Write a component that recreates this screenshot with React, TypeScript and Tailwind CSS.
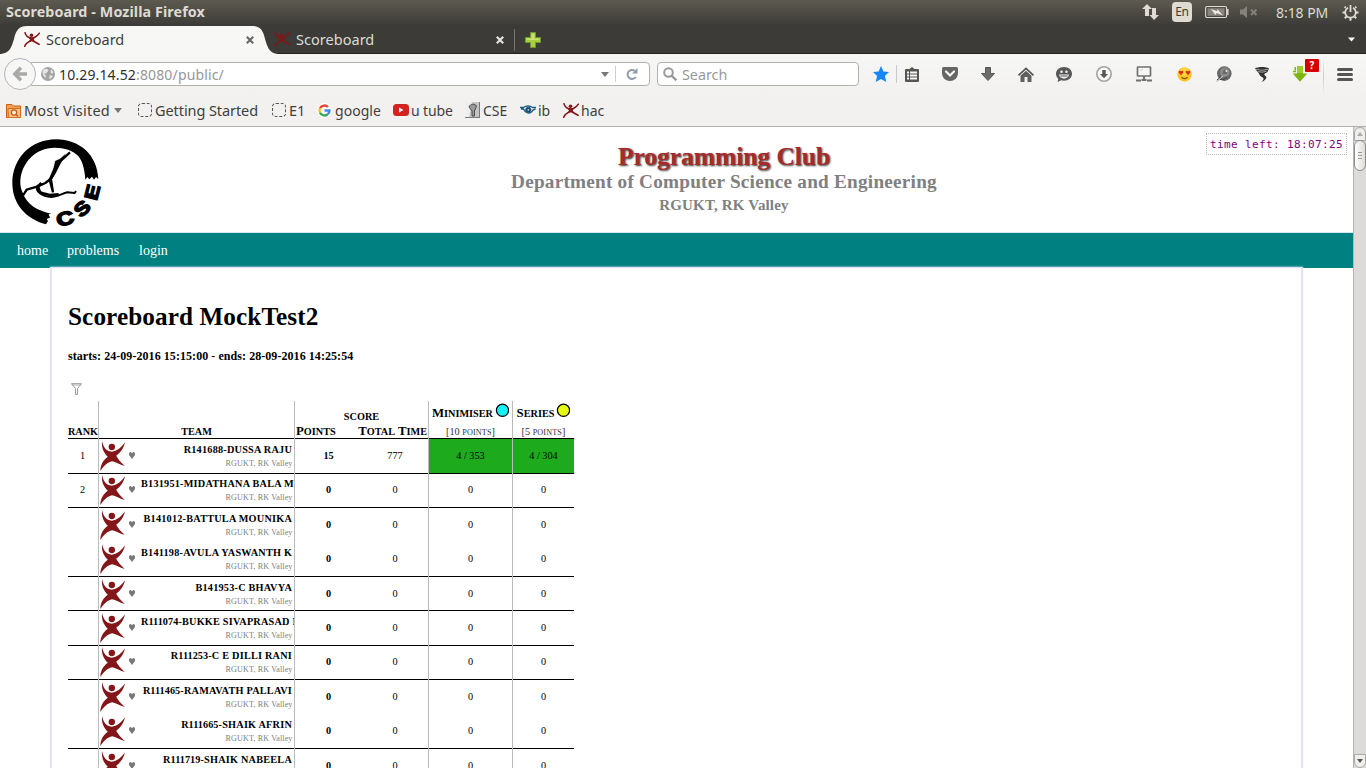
import React from "react";

function Figure({ className }: { className: string }) {
  return (
    <svg className={className} viewBox="0 0 74 90" preserveAspectRatio="none" fill="#821618">
      <circle cx="35" cy="18" r="9.500" />
      <path d="M6 0C10 18 18 31 35 32C50 31 64 19 74 4C70 22 60 36 48 44C52 53 62 64 73 75C58 71 46 63 36 61C22 64 12 74 1 90C1 72 10 56 23 47C11 36 4 20 6 0Z" />
    </svg>
  );
}

function SmallFigure({ className }: { className: string }) {
  return (
    <svg className={className} viewBox="0 0 16 15" preserveAspectRatio="none" fill="none" stroke="#821618" strokeLinecap="round">
      <circle cx="7.500" cy="3.200" r="1.800" fill="#821618" stroke="none" />
      <path d="M1 0.700C2 4 5 5.800 7.500 6C10.500 5.800 13.500 3.500 15.300 1.200" strokeWidth="1.500" />
      <path d="M0.700 14.300C2 10.500 5 9.500 8 8.300C10 9.500 12.500 11 15 12.300" strokeWidth="1.600" />
      <path d="M4.500 5.500H10.800L9.800 7.500L11 9.700L8 8.900L4.500 10L6 7.500Z" fill="#821618" stroke="none" />
    </svg>
  );
}

function Caps({ text, first = "text-[12.8px]", rest = "text-[10.24px]" }: { text: string; first?: string; rest?: string }) {
  return (
    <>
      {text.split(" ").map((w, i) => (
        <React.Fragment key={i}>
          {i > 0 && " "}
          <span className={first}>{w[0]}</span>
          <span className={`${rest} uppercase`}>{w.slice(1)}</span>
        </React.Fragment>
      ))}
    </>
  );
}

function TitleBar() {
  return (
    <div className="flex h-6 items-center bg-gradient-to-b from-[#5d5a4f] to-[#3e3d39] pl-1.5 text-[#dfdbd2]">
      <span className="w-[1136px] text-[14.3px] font-bold tracking-[0.1px]">Scoreboard - Mozilla Firefox</span>
      <svg className="h-4 w-[17px]" viewBox="0 0 17 16" fill="#dfdbd2">
        <path d="M5 0L10 5H7V12H3V5H0ZM12 16L7.500 11H10V4H14V11H17Z" />
      </svg>
      <div className="ml-[13px] flex h-5 w-5 items-center justify-center rounded-sm bg-[#dfdbd2] text-[12px] tracking-tight text-[#3c3b37]">En</div>
      <svg className="ml-[13px] h-4 w-6" viewBox="0 0 24 16" fill="none" stroke="#dfdbd2">
        <rect x="0.600" y="2.500" width="21" height="11" rx="1.500" strokeWidth="1.100" />
        <rect x="2.500" y="4.300" width="17" height="7.500" fill="#88857e" stroke="none" />
        <path d="M22.800 5V11" strokeWidth="1.500" />
        <path d="M6 5L12 7.300L12.500 5.300L18 11.500L11.500 9L10.500 11Z" fill="#eeeae0" stroke="none" />
      </svg>
      <svg className="ml-[11px] h-4 w-[18px]" viewBox="0 0 18 16" fill="#85827b">
        <path d="M0 5.500H3L7 2V14L3 10.500H0Z" />
        <path d="M11 5.500L16.500 11M16.500 5.500L11 11" stroke="#85827b" strokeWidth="1.800" />
      </svg>
      <span className="ml-[18px] w-[53px] whitespace-nowrap text-[14px] tracking-[-0.05px]">8:18 PM</span>
      <svg className="ml-[13px] h-[17px] w-[17px] shrink-0" viewBox="0 0 17 17" fill="none" stroke="#dfdbd2">
        <path d="M6 3.700A5.300 5.300 0 1 0 11 3.700" strokeWidth="1.800" />
        <path d="M8.500 1V8" strokeWidth="1.800" />
        <path d="M3.800 3.800L2.600 2.600M13.200 3.800L14.400 2.600M3 8.500H0.500M14 8.500H16.500M4.500 12.500L2.800 14.200M12.500 12.500L14.200 14.200M8.500 14V16.800" strokeWidth="2" />
      </svg>
    </div>
  );
}

function CloseX({ color }: { color: string }) {
  return (
    <svg className="h-2 w-2 shrink-0" viewBox="0 0 8 8" stroke={color} strokeWidth="2.200">
      <path d="M0.800 0.800L7.200 7.200M7.200 0.800L0.800 7.200" />
    </svg>
  );
}

function Tabs() {
  return (
    <div className="flex h-[30px] bg-[#3c3b37]">
      <div className="relative h-[30px] w-[278px]">
        <svg className="absolute inset-0 h-[30px] w-[278px]" viewBox="0 0 278 30">
          <path d="M0 29.500H278" stroke="#23221f" />
          <path d="M0 30C9 29 11 25 14 15C16 6 19 2 27 2H252C260 2 263 6 265 15C268 25 270 29 278 30Z" fill="#f7f7f5" />
        </svg>
        <div className="relative flex h-[31px] items-center pl-6">
          <SmallFigure className="h-[15px] w-4 shrink-0" />
          <span className="ml-[6px] w-[200px] text-[14.5px] tracking-[0.03px] text-[#3f3f3c]">Scoreboard</span>
          <CloseX color="#6a6a68" />
        </div>
      </div>
      <div className="flex h-[30px] flex-1 items-center border-b border-[#23221f] pt-[2px]">
        <SmallFigure className="-ml-[4px] h-[15px] w-4 shrink-0" />
        <span className="ml-[6px] w-[200px] text-[14.5px] tracking-[0.03px] text-[#dfdbd2]">Scoreboard</span>
        <CloseX color="#e6e3dc" />
        <div className="ml-[10px] h-[22px] w-px bg-[#77756f]" />
        <svg className="ml-[10px] h-4 w-4" viewBox="0 0 16 16">
          <path d="M5.500 0.500H10.500V5.500H15.500V10.500H10.500V15.500H5.500V10.500H0.500V5.500H5.500Z" fill="#a8cc3c" stroke="#6c9a33" />
          <path d="M6.500 1.500H9.500V6.500H14.500V8H1.500V6.500H6.500Z" fill="#c9e26c" />
        </svg>
        <svg className="ml-auto mr-[11px] h-[5px] w-[7px]" viewBox="0 0 7 5" fill="#fff">
          <path d="M0 0.500H7L3.500 4.500Z" />
        </svg>
      </div>
    </div>
  );
}

function NavBar() {
  return (
    <div className="flex h-10 items-center bg-gradient-to-b from-[#f7f7f5] to-[#f2f1f0] pl-1">
      <div className="z-10 flex h-8 w-8 items-center justify-center rounded-full border border-[#b0b6bd] bg-[#f7f7f6]">
        <svg className="h-4 w-4" viewBox="0 0 16 16" fill="none" stroke="#a9a9a9" strokeWidth="3.400">
          <path d="M15 8H3M9 1.800L2.800 8L9 14.200" />
        </svg>
      </div>
      <div className="-ml-[5px] flex h-6 w-[619px] items-center rounded-r-sm border border-[#b2b1ae] bg-white pl-[9px]">
        <svg className="h-[14px] w-[14px] shrink-0" viewBox="0 0 14 14">
          <circle cx="7" cy="7" r="7" fill="#a3a3a3" />
          <path d="M2 3C4 1 7 1.500 7.500 3.500L5.500 6L3.500 6.500L5 9L4.500 11L2.500 9L1.500 5ZM10 2L12.500 5L11 7L9.500 5.500ZM9 8L12 9L9.500 12L8 11Z" fill="#e4e4e4" />
        </svg>
        <span className="ml-[4px] w-[542px] shrink-0 text-[14px] tracking-[0.15px] text-[#2f2f2f]">
          10.29.14.52<span className="tracking-[0.15px] text-[#979797]">:8080/public/</span>
        </span>
        <svg className="h-[5px] w-[8px] shrink-0" viewBox="0 0 8 5"><path d="M0 0H8L4 5Z" fill="#777" /></svg>
        <div className="ml-[6px] h-4 w-px shrink-0 bg-[#cfcfcd]" />
        <svg className="ml-[10px] h-[12px] w-[12px] shrink-0" viewBox="0 0 12 12">
          <path d="M9.800 9A4.500 4.500 0 1 1 8.800 2.800" fill="none" stroke="#8e9ba8" strokeWidth="2" />
          <path d="M11.500 0V5.500H6Z" fill="#8e9ba8" />
        </svg>
      </div>
      <div className="ml-[7px] flex h-6 w-[202px] items-center rounded-sm border border-[#b2b1ae] bg-white pl-[5px]">
        <svg className="h-[14px] w-[14px]" viewBox="0 0 14 14" fill="none" stroke="#999">
          <circle cx="5.500" cy="5.500" r="4.300" strokeWidth="2" />
          <path d="M8.500 8.500L13.300 13.300" strokeWidth="2.400" />
        </svg>
        <span className="ml-[5px] mt-[2px] text-[14.3px] text-[#999]">Search</span>
      </div>
      <div className="ml-[10px] flex w-6 justify-center">
        <svg className="h-4 w-4" viewBox="0 0 16 16" fill="#1488f5">
          <path d="M8 0L10.400 5.400L16 6L11.900 9.900L13.300 16L8 12.900L2.700 16L4.100 9.900L0 6L5.600 5.400Z" />
        </svg>
      </div>
      <div className="ml-[3px] h-[18px] w-px bg-[#c5cad0]" />
      <div className="flex w-[34px] justify-center pr-[4px]">
        <svg className="h-[15px] w-[14px]" viewBox="0 0 14 15">
          <path d="M1 2H4.500L7 0L9.500 2H13Q14 2 14 3V14Q14 15 13 15H1Q0 15 0 14V3Q0 2 1 2Z" fill="#555" />
          <path d="M2 5.500H4M2 8.500H4M2 11.500H4M5 5.500H12M5 8.500H12M5 11.500H12" stroke="#f6f6f5" strokeWidth="2" />
        </svg>
      </div>
      <div className="flex w-[38px] justify-center">
        <svg className="h-[14px] w-4" viewBox="0 0 16 14">
          <path d="M1.500 0H14.500Q16 0 16 1.500V6C16 11 12 14 8 14S0 11 0 6V1.500Q0 0 1.500 0Z" fill="#666" />
          <path d="M4 4.500L8 8.500L12 4.500" fill="none" stroke="#f6f6f5" strokeWidth="2.200" strokeLinecap="round" />
        </svg>
      </div>
      <div className="flex w-[38px] justify-center">
        <svg className="h-[14px] w-[14px]" viewBox="0 0 14 14"><path d="M4.500 0.500H9.500V6.500H13.500L7 13.500L0.500 6.500H4.500Z" fill="#6c6c6c" stroke="#555" /></svg>
      </div>
      <div className="flex w-[38px] justify-center">
        <svg className="h-[15px] w-4" viewBox="0 0 16 15">
          <path d="M0.500 8.300L8 1.300L15.500 8.300" fill="none" stroke="#505050" strokeWidth="1.600" />
          <path d="M2.500 8.700L8 3.700L13.500 8.700V15H9.500V10H6.500V15H2.500Z" fill="#606060" />
        </svg>
      </div>
      <div className="flex w-[38px] justify-center">
        <svg className="h-[15px] w-4" viewBox="0 0 16 15">
          <path d="M8 0C13 0 16 3 16 6.800C16 11 12.500 13.700 8 13.700C7 13.700 6 13.600 5.200 13.300L1.500 15L2.300 11.900C0.800 10.600 0 8.800 0 6.800C0 3 3 0 8 0Z" fill="#585858" />
          <circle cx="5.500" cy="4.800" r="1.300" fill="#eee" /><circle cx="10.500" cy="4.800" r="1.300" fill="#eee" />
          <path d="M3 7.500H13C12.500 13 3.500 13 3 7.500Z" fill="#eee" />
          <path d="M4.500 9H11.500" stroke="#585858" />
        </svg>
      </div>
      <div className="flex w-[42px] justify-center">
        <svg className="h-4 w-4" viewBox="0 0 16 16">
          <circle cx="8" cy="8" r="7.200" fill="#f8f8f7" stroke="#a3a3a3" strokeWidth="1.600" />
          <path d="M6.300 4H9.700V8H12L8 12.300L4 8H6.300Z" fill="#555" />
        </svg>
      </div>
      <div className="flex w-[38px] justify-center">
        <svg className="h-4 w-4" viewBox="0 0 16 16" fill="none" stroke="#707070">
          <rect x="1.500" y="1" width="13" height="9" rx="0.500" strokeWidth="1.700" fill="#f8f8f7" />
          <path d="M8 10V14M0 14.500H5M11 14.500H16M5.500 14H10.500" strokeWidth="2" />
          <path d="M4 5L7 3" stroke="#ccc" />
        </svg>
      </div>
      <div className="flex w-[42px] justify-center">
        <svg className="h-[15px] w-[15px]" viewBox="0 0 15 15">
          <circle cx="7.500" cy="7.500" r="7.200" fill="#fbc526" />
          <circle cx="7.500" cy="5" r="4" fill="#fde04c" opacity=".7" />
          <path d="M4 8.300L1.700 5.500C1.200 3.500 3.500 3 4 4.500C4.600 3 6.900 3.500 6.300 5.500ZM11 8.300L8.700 5.500C8.200 3.500 10.500 3 11 4.500C11.600 3 13.900 3.500 13.300 5.500Z" fill="#e02a1c" />
          <path d="M4.500 10.300Q7.500 13 10.500 10.300" fill="none" stroke="#8a5312" strokeWidth="1.200" />
        </svg>
      </div>
      <div className="flex w-[38px] justify-center">
        <svg className="h-4 w-4" viewBox="0 0 16 16">
          <circle cx="8.300" cy="7.600" r="7.300" fill="#666" />
          <circle cx="8.800" cy="6.200" r="4.800" fill="#8b8b8b" />
          <path d="M9 3L11.500 5.500L10.500 8L6.500 8L7 5Z" fill="#6a6a6a" />
          <circle cx="10.500" cy="5" r="1" fill="#eee" />
          <path d="M0.500 15.500L7 10" stroke="#bdbdbd" strokeWidth="1.300" fill="none" />
          <path d="M1 14L5 10.500M4 13.500Q8 14.500 11 11" stroke="#444" fill="none" />
        </svg>
      </div>
      <div className="flex w-[38px] justify-center">
        <svg className="h-[15px] w-[14px]" viewBox="0 0 14 15" fill="#333">
          <path d="M0 1.500C3 -0.500 11 -0.500 14 1.500L12.500 5C10 6.500 8 7 10.500 9C13 11 9.500 14 6.500 15C9.500 12 9 11 6.500 9.700C3.500 8 5 6.500 2.500 5Z" />
          <path d="M1 2.300Q7 4.300 13 2.300M2.500 4.500Q7 6 11.500 4.300" stroke="#bbb" strokeWidth=".8" fill="none" />
        </svg>
      </div>
      <div className="relative flex w-[38px] justify-center">
        <svg className="h-4 w-4" viewBox="0 0 16 16">
          <path d="M5 0H11V7.500H15.300L8 15.700L0.700 7.500H5Z" fill="#7db511" />
          <path d="M5 0H11V7H5Z" fill="#9dcc2d" />
          <path d="M3.300 1V4.500M1 5.500H4" stroke="#7db511" strokeWidth="1.500" />
        </svg>
        <div className="absolute left-[24px] top-[-7px] flex h-[13px] w-[14px] items-center justify-center rounded-[1px] bg-[#d40000] text-[10px] font-bold text-white">?</div>
      </div>
      <div className="ml-[4px] mt-1 h-[34px] w-px bg-gradient-to-b from-[#eee] via-[#ccc] to-[#eee]" />
      <div className="ml-[13px] flex w-4 flex-col gap-[2px]">
        <div className="h-[3px] rounded-sm bg-[#555]" />
        <div className="h-[3px] rounded-sm bg-[#555]" />
        <div className="h-[3px] rounded-sm bg-[#555]" />
      </div>
    </div>
  );
}

function Bookmarks() {
  return (
    <div className="flex h-[33px] items-center border-b border-[#b1b0ab] bg-[#f2f1f0] pl-[6px] text-[14px] text-[#3f3f3d]">
      <svg className="h-[15px] w-[15px] shrink-0" viewBox="0 0 15 15">
        <path d="M0.500 1.500H6L7.500 3H14.500V14.500H0.500Z" fill="#f3a155" stroke="#ca5f13" />
        <path d="M2 5.500H14.500V14.500H2.500Z" fill="#f9c08a" stroke="#d4701f" />
        <circle cx="8" cy="9.500" r="2.600" fill="#fff0e0" stroke="#c55a11" strokeWidth="1.200" />
        <path d="M10 11.500L12 13.500" stroke="#c55a11" strokeWidth="1.500" />
      </svg>
      <span className="ml-[3px] mt-[2px] w-[90px] whitespace-nowrap text-[14.5px] tracking-[0.22px]">Most Visited</span>
      <svg className="h-[5px] w-[8px] shrink-0" viewBox="0 0 8 5"><path d="M0 0H8L4 5Z" fill="#777" /></svg>
      <div className="ml-[16px] h-[14px] w-[14px] shrink-0 rounded-sm border border-dashed border-[#555]" />
      <span className="ml-[3px] mt-[2px] w-[117px] whitespace-nowrap text-[14.5px] tracking-[-0.08px]">Getting Started</span>
      <div className="h-[14px] w-[14px] shrink-0 rounded-sm border border-dashed border-[#555]" />
      <span className="ml-[3px] mt-[2px] w-[28px] text-[14.5px]">E1</span>
      <svg className="h-[15px] w-[15px] shrink-0" viewBox="0 0 15 15" fill="none" strokeWidth="2.400">
        <circle cx="7.500" cy="7.500" r="7.500" fill="#fff" />
        <path d="M11 4A5 5 0 0 0 3 5.300" stroke="#ea4335" />
        <path d="M3 5.300A5 5 0 0 0 3 9.700" stroke="#fbbc05" />
        <path d="M3 9.700A5 5 0 0 0 10.800 11.200" stroke="#34a853" />
        <path d="M10.800 11.200A5 5 0 0 0 12.500 7.500H7.500" stroke="#4285f4" />
      </svg>
      <span className="ml-[3px] w-[58px] tracking-[0.03px]">google</span>
      <svg className="h-3 w-4 shrink-0" viewBox="0 0 16 12"><rect width="16" height="12" rx="3.500" fill="#d3231f" /><path d="M6 3.500L10.500 6L6 8.500Z" fill="#fff" /></svg>
      <span className="ml-[2px] w-[54px] whitespace-nowrap tracking-[-0.1px]">u tube</span>
      <svg className="h-4 w-[15px] shrink-0" viewBox="0 0 15 16">
        <path d="M0 0H15V16H0Z" fill="#c4c4c4" /><path d="M0 0H7L4 16H0Z" fill="#eee" />
        <path d="M4 5C5 1.500 10 1.500 11.500 4L9.500 9V14H7V9Z" fill="#999" stroke="#333" strokeWidth=".8" />
        <path d="M0 15.500H15M14.500 0V16" stroke="#777" />
      </svg>
      <span className="ml-[3px] w-[37px] tracking-[-0.05px]">CSE</span>
      <svg className="h-[10px] w-4 shrink-0" viewBox="0 0 16 10" fill="none" stroke="#1f5d82">
        <path d="M0 2.500H3.500C6 0.500 10 0.500 12.500 2.500H16M1 4H3.500C6.500 9.500 11 9 13 5L15.500 4" strokeWidth="1.400" />
        <circle cx="8.300" cy="4.800" r="2.600" fill="#1f4666" strokeWidth="1" /><circle cx="8.300" cy="4.800" r=".9" fill="#bde" stroke="none" />
      </svg>
      <span className="ml-[2px] w-[25px]">ib</span>
      <SmallFigure className="h-[15px] w-4 shrink-0" />
      <span className="ml-[2px]">hac</span>
    </div>
  );
}

function Logo() {
  return (
    <svg className="h-[88px] w-[90px] overflow-visible" viewBox="0 0 270 264">
      <path d="M259 120C256 50 205 1 132 1C55 1 1 60 1 132C1 195 42 240 102 256L108 246L104 240L114 236L110 226L118 224C76 216 45 196 34 166C27 150 24 140 25 126C28 72 70 26 128 26C158 26 182 34 198 50C212 66 218 92 220 122L226 114L232 121L240 113L246 122L252 114Z" fill="#000" />
      <g fill="none" stroke="#000" strokeLinejoin="round">
        <path d="M34 168L44 152L78 142L100 132L118 118L126 102L130 84L146 66L174 40" strokeWidth="7" />
        <path d="M125 88L130 66L144 60L160 46L142 80L130 104L118 122L104 130L112 118Z" fill="#000" />
        <path d="M112 122L122 160M118 122L124 160" strokeWidth="5" />
        <path d="M78 138C66 158 92 172 118 174C134 174 150 164 166 160L188 162L192 156" strokeWidth="6" />
        <path d="M88 132L78 142L84 160L112 168L140 166" strokeWidth="8" />
        <path d="M88 146C98 138 110 144 106 154C98 162 88 156 92 148" stroke="#fff" strokeWidth="4" />
      </g>
      <g fontFamily="Liberation Sans" fontWeight="bold" fontSize="56" textAnchor="middle" stroke="#000" strokeWidth="4.500">
        <text transform="translate(164 257) rotate(-15) scale(1.3 1)">C</text>
        <text transform="translate(224 222) rotate(-44) scale(1.2 1)">S</text>
        <text transform="translate(260 164) rotate(-76) scale(1.2 1)">E</text>
      </g>
    </svg>
  );
}

function PageHeader() {
  return (
    <div className="flex h-[106px] shrink-0 border-b border-[#dde3ee]">
      <div className="w-[400px] pl-[12px] pt-[12px]"><Logo /></div>
      <div className="w-[648px] pt-[15px] text-center font-bold text-[#808080]">
        <div className="h-[26px] text-[25.6px] leading-[30px] tracking-[-0.08px] text-[#a52a2a] [text-shadow:1px_1px_2px_#333]">Programming Club</div>
        <div className="h-[24px] text-[19.2px] leading-[28px] tracking-[0.24px]">Department of Computer Science and Engineering</div>
        <div className="text-[15px] leading-[26px] tracking-[0.16px]">RGUKT, RK Valley</div>
      </div>
      <div className="ml-auto mr-[6px] mt-[6px] h-[22px] w-[141px] whitespace-nowrap border border-dotted border-[#bbb] pl-[3px] font-['DejaVu_Sans_Mono',monospace] text-[11px] leading-[21px] tracking-[0.38px] text-[#800080]">
        time left: 18:07:25
      </div>
    </div>
  );
}

type Team = { rank?: number; id: string; name: string; points: number; time: number; line: boolean; p: [string, string] };
const zero: [string, string] = ["0", "0"];
const teams: Team[] = [
  { rank: 1, id: "R141688", name: "DUSSA RAJU", points: 15, time: 777, line: true, p: ["4 / 353", "4 / 304"] },
  { rank: 2, id: "B131951", name: "MIDATHANA BALA M", points: 0, time: 0, line: true, p: zero },
  { id: "B141012", name: "BATTULA MOUNIKA", points: 0, time: 0, line: false, p: zero },
  { id: "B141198", name: "AVULA YASWANTH K", points: 0, time: 0, line: true, p: zero },
  { id: "B141953", name: "C BHAVYA", points: 0, time: 0, line: true, p: zero },
  { id: "R111074", name: "BUKKE SIVAPRASAD N", points: 0, time: 0, line: true, p: zero },
  { id: "R111253", name: "C E DILLI RANI", points: 0, time: 0, line: true, p: zero },
  { id: "R111465", name: "RAMAVATH PALLAVI", points: 0, time: 0, line: false, p: zero },
  { id: "R111665", name: "SHAIK AFRIN", points: 0, time: 0, line: true, p: zero },
  { id: "R111719", name: "SHAIK NABEELA", points: 0, time: 0, line: true, p: zero },
];

function Cell({ w, line, right = true, className = "", children }: { w: string; line: boolean; right?: boolean; className?: string; children?: React.ReactNode }) {
  return (
    <div className={`${w} h-full shrink-0 ${right ? "border-r border-[#bbb]" : ""}`}>
      <div className={`flex h-full ${line ? "border-b border-black" : ""} ${className}`}>{children}</div>
    </div>
  );
}

function Row({ t }: { t: Team }) {
  const hit = t.points > 0 ? "bg-[#1daa1d]" : "";
  const idTracking = t.id.startsWith("R111") ? "tracking-[0.06px]" : "tracking-[0.22px]";
  return (
    <div className="flex h-[34.4px] shrink-0 text-[10.24px] leading-[14px]">
      <Cell w="w-[31px]" line={t.line} className="justify-center pt-[9.6px]"><span className="-ml-px">{t.rank}</span></Cell>
      <Cell w="w-[196px]" line={t.line} className="overflow-hidden">
        <Figure className="ml-px mt-[1.6px] h-[30px] w-[25px] shrink-0" />
        <svg className="ml-[4px] mt-[12.600px] h-[7px] w-[6px] shrink-0" viewBox="0 0 6 7" fill="#777">
          <path d="M3 7L0 3V1.500Q0 0 1.500 0Q2.600 0 3 1.500Q3.400 0 4.500 0Q6 0 6 1.500V3Z" />
        </svg>
        <div className="ml-[6px] w-[153px] overflow-hidden whitespace-nowrap pt-[3.6px] text-right">
          <div className="pr-[2px] font-bold tracking-[0.22px]"><span className={idTracking}>{t.id}</span>-{t.name}</div>
          <div className="pr-[1.5px] text-[8.1px] tracking-[0.11px] text-[#808080]">RGUKT, RK Valley</div>
        </div>
      </Cell>
      <Cell w="w-[134px]" line={t.line} className="pt-[9.6px] text-center">
        <div className="w-[67px] font-bold">{t.points}</div>
        <div className="w-[66px]">{t.time}</div>
      </Cell>
      <Cell w="w-[84px]" line={t.line} className={`justify-center pt-[9.6px] ${hit}`}>{t.p[0]}</Cell>
      <Cell w="w-[61px]" line={t.line} right={false} className={`justify-center pt-[9.6px] ${hit}`}>{t.p[1]}</Cell>
    </div>
  );
}

function ProblemHead({ name, points, fill }: { name: string; points: string; fill: string }) {
  return (
    <div className="flex w-full flex-col items-center pt-[2px]">
      <div className="flex h-[20px] items-start whitespace-nowrap font-bold leading-[20px]">
        <span className="leading-[20px]"><Caps text={name} /></span>
        <svg className="ml-[2px] h-[14px] w-[14px]" viewBox="0 0 14 14"><circle cx="7.500" cy="7.300" r="6.100" fill={fill} stroke="#000" strokeWidth="1.200" /></svg>
      </div>
      <div className="text-[10.24px] leading-[18px] text-[#333]">[{points} <span className="text-[8.2px] uppercase tracking-[0.12px]">points</span>]</div>
    </div>
  );
}

function Scoreboard() {
  return (
    <div className="flex flex-col">
      <div className="flex h-[38.400px] shrink-0 text-[10.24px] font-bold leading-[14px]">
        <Cell w="w-[31px]" line className="items-end justify-center leading-[12px]"><span>RANK</span></Cell>
        <Cell w="w-[196px]" line className="items-end justify-center leading-[12px]">TEAM</Cell>
        <Cell w="w-[134px]" line className="flex-col justify-end">
          <div className="pb-px text-center">SCORE</div>
          <div className="flex justify-between whitespace-nowrap px-[1px] leading-[13px]">
            <span><Caps text="Points" /></span>
            <span className="text-[12.8px] leading-[13px]"><Caps text="Total Time" /></span>
          </div>
        </Cell>
        <Cell w="w-[84px]" line className="font-normal"><ProblemHead name="Minimiser" points="10" fill="#15f1f7" /></Cell>
        <Cell w="w-[61px]" line right={false} className="font-normal"><ProblemHead name="Series" points="5" fill="#e8fb12" /></Cell>
      </div>
      {teams.map((t) => <Row key={t.id} t={t} />)}
    </div>
  );
}

function ScrollBar() {
  return (
    <div className="flex h-full w-[13px] shrink-0 flex-col items-center border-l border-[#b5b4b0] bg-[#dcdbd9]">
      <div className="flex h-[14px] w-3 items-center justify-center rounded-t-full border border-[#aaa9a5] bg-[#f0efee]">
        <svg className="h-1 w-[6px]" viewBox="0 0 6 4"><path d="M3 0L6 4H0Z" fill="#aaa" /></svg>
      </div>
      <div className="-mt-px flex h-[31px] w-3 flex-col items-center justify-center gap-[2px] rounded-md border border-[#8f8d88] bg-gradient-to-r from-white to-[#dedddb]">
        <div className="h-px w-1 bg-[#999]" /><div className="h-px w-1 bg-[#999]" /><div className="h-px w-1 bg-[#999]" />
      </div>
      <div className="mt-auto flex h-[14px] w-3 items-center justify-center rounded-b-full border border-[#aaa9a5] bg-[#f0efee]">
        <svg className="h-1 w-[6px]" viewBox="0 0 6 4"><path d="M3 4L6 0H0Z" fill="#555" /></svg>
      </div>
    </div>
  );
}

export default function App() {
  return (
    <div className="flex h-[768px] w-[1366px] flex-col overflow-hidden bg-white font-['Noto_Sans',sans-serif]">
      <TitleBar />
      <Tabs />
      <NavBar />
      <Bookmarks />
      <div className="flex h-[641px] font-['Liberation_Serif',serif] text-black">
        <div className="flex min-w-0 flex-1 flex-col overflow-hidden">
          <PageHeader />
          <div className="flex h-[35px] shrink-0 items-center bg-[#008080] pl-[17px] text-[14px] text-white">
            <span className="w-[50px]">home</span><span className="w-[72px]">problems</span><span>login</span>
          </div>
          <div className="-mt-px ml-[50px] w-[1253px] flex-1 border-x-2 border-t border-[#e2e3f8] bg-white pl-[16px] shadow-[0_0_2px_#e6e6fa]">
            <div className="h-[69px] pt-[34px] text-[25.2px] font-bold leading-[30px] tracking-[0.1px]">Scoreboard MockTest2</div>
            <div className="h-[40px] pt-[11px] text-[12px] font-bold leading-4 tracking-[0.06px]">starts: 24-09-2016 15:15:00 - ends: 28-09-2016 14:25:54</div>
            <div className="h-[24px] pl-[3px] pt-[6px]">
              <svg className="h-[12px] w-[11px]" viewBox="0 0 11 12" fill="none" stroke="#999"><path d="M0.500 0.700H10.500L6.500 5.500V11.500H4.500V5.500Z" /><path d="M1 2H10" strokeWidth=".7" /></svg>
            </div>
            <Scoreboard />
          </div>
        </div>
        <ScrollBar />
      </div>
    </div>
  );
}
